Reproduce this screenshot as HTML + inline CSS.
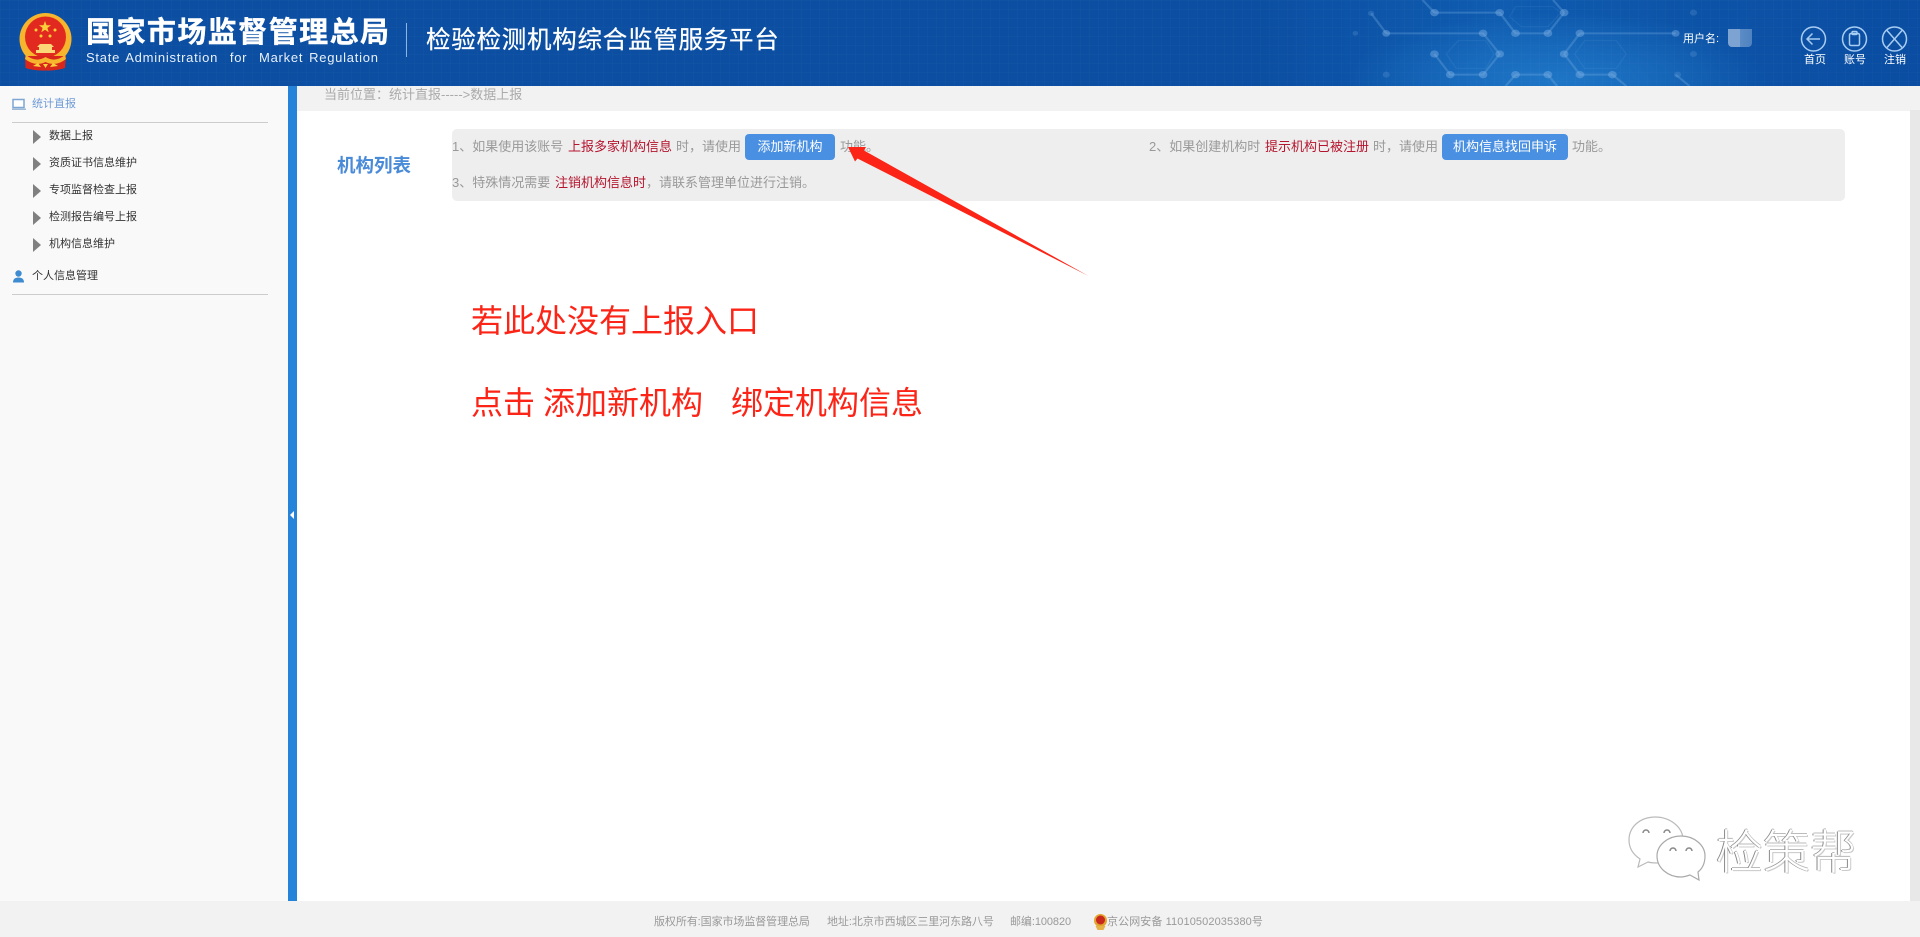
<!DOCTYPE html>
<html lang="zh-CN">
<head>
<meta charset="utf-8">
<title>检验检测机构综合监管服务平台</title>
<style>
html,body{margin:0;padding:0;width:1920px;height:937px;overflow:hidden;background:#fff}
body{position:relative;font-family:"Liberation Sans","Noto Sans CJK SC",sans-serif}
.a{position:absolute}
.t{position:absolute;white-space:nowrap;line-height:20px;height:20px}
.hdr{left:0;top:0;width:1920px;height:86px;overflow:hidden;background:
 radial-gradient(ellipse 210px 70px at 1557px 82px,#1f76c6 0%,rgba(31,118,198,.55) 50%,rgba(31,118,198,0) 100%),
 linear-gradient(90deg,#0b4ea2 0%,#0b4ea2 65%,#0f5cb0 78%,#0c52a6 90%,#0a4da2 100%)}
.grid{left:0;top:0;width:1920px;height:86px;background-image:linear-gradient(rgba(255,255,255,.015) 1px,transparent 1px),linear-gradient(90deg,rgba(255,255,255,.015) 1px,transparent 1px);background-size:9px 9px}
.w{color:#fff}
.side{font-size:11px;color:#333}
.tri{position:absolute;left:33px;width:0;height:0;border-left:8px solid #808080;border-top:7px solid transparent;border-bottom:7px solid transparent}
.g{color:#999;font-size:13px}
.r{color:#b5152e;font-size:13px}
.btn{position:absolute;top:134px;height:26px;line-height:25px;background:#4a90e2;border-radius:4px;color:#fff;font-size:13px;text-align:center}
.note{color:#fb2416;font-size:32px;line-height:40px;height:40px}
.f{color:#999;font-size:11px;letter-spacing:-.08px}
</style>
</head>
<body>
<div class="a hdr"></div>
<div class="a grid"></div>

<svg class="a" style="left:1300px;top:0" width="620" height="86" viewBox="0 0 1568 258" preserveAspectRatio="none">
 <g fill="none" stroke="#7fb2e6" stroke-opacity=".3" stroke-width="6">
  <path d="M340 38H505L545 100H627L668 38"/>
  <path d="M218 100H463L505 162L463 224H380L340 162"/>
  <path d="M708 100H950M708 100L668 162L708 224H790L825 258"/>
  <path d="M545 224H627L650 258M545 224L520 258"/>
  <path d="M310 0L340 38M640 0L668 38M950 224L985 258M180 40L218 100"/>
 </g>
 <g fill="none" stroke="#7fb2e6" stroke-opacity=".12" stroke-width="3">
  <path d="M400 122H470L490 162L470 205H395L370 162Z"/>
  <path d="M720 122H800L825 162L800 205H720L695 162Z"/>
  <path d="M545 20H640L660 38L627 80H560L530 50Z"/>
 </g>
 <g fill="#85b6e8" fill-opacity=".42">
  <circle cx="340" cy="38" r="11"/><circle cx="505" cy="38" r="11"/><circle cx="668" cy="38" r="11"/>
  <circle cx="545" cy="100" r="11"/><circle cx="627" cy="100" r="11"/><circle cx="708" cy="100" r="11"/>
  <circle cx="218" cy="100" r="10"/><circle cx="463" cy="100" r="11"/><circle cx="950" cy="100" r="10"/>
  <circle cx="340" cy="162" r="11"/><circle cx="505" cy="162" r="11"/><circle cx="668" cy="162" r="11"/>
  <circle cx="380" cy="224" r="11"/><circle cx="463" cy="224" r="11"/><circle cx="545" cy="224" r="11"/>
  <circle cx="627" cy="224" r="11"/><circle cx="708" cy="224" r="11"/><circle cx="790" cy="224" r="11"/>
 </g>
 <g fill="#85b6e8" fill-opacity=".2">
  <circle cx="180" cy="40" r="8"/><circle cx="140" cy="100" r="7"/><circle cx="218" cy="224" r="9"/>
  <circle cx="995" cy="38" r="9"/><circle cx="995" cy="162" r="9"/><circle cx="955" cy="224" r="9"/>
 </g>
</svg>

<!-- emblem -->
<svg class="a" style="left:0;top:0" width="100" height="80" viewBox="0 0 100 80">
 <circle cx="45.500" cy="39" r="26" fill="#f7b52d"/>
 <circle cx="45.500" cy="37" r="20.500" fill="#e2291f"/>
 <path d="M45 21l1.500 4.300h4.500l-3.600 2.700 1.300 4.300-3.700-2.600-3.700 2.600 1.300-4.300-3.600-2.700h4.500z" fill="#fbcf3a"/>
 <circle cx="36" cy="30" r="1.500" fill="#fbcf3a"/><circle cx="41" cy="36" r="1.500" fill="#fbcf3a"/>
 <circle cx="50" cy="36" r="1.500" fill="#fbcf3a"/><circle cx="55" cy="30" r="1.500" fill="#fbcf3a"/>
 <path d="M40 44h11l3 3h-2v3h3v3H36v-3h3v-3h-2z" fill="#fcd778"/>
 <path d="M25 56h41l-1 12q-9 3-19.500 2.500q-11 .5-20-2.500z" fill="#d8261c"/>
 <path d="M26 55q10 8 19.500 2q9.500 6 19.500-2l1 4q-10 8-20.500 3q-10.500 5-20.500-3z" fill="#f7b52d"/>
 <path d="M33 66l5-3 3 4zM58 66l-5-3-3 4zM43 64h5l-2.500 4z" fill="#fbcf3a"/>
</svg>

<div class="t w" style="left:86px;top:18px;height:30px;line-height:30px;font-size:29px;font-weight:700;letter-spacing:1.450px;-webkit-text-stroke:.4px #fff">国家市场监督管理总局</div>
<div class="t w" style="left:86px;top:48px;font-size:13px;letter-spacing:.75px;word-spacing:1.500px;color:#e8f0fa">State Administration&nbsp; for&nbsp; Market Regulation</div>
<div class="a" style="left:405.500px;top:23px;width:1.500px;height:34px;background:#8fb4dd"></div>
<div class="t w" style="left:426px;top:26px;height:30px;line-height:30px;font-size:24.500px;letter-spacing:.75px;-webkit-text-stroke:.25px #fff">检验检测机构综合监管服务平台</div>

<div class="t w" style="left:1683px;top:29px;font-size:11px">用户名:</div>
<div class="a" style="left:1728px;top:29px;width:24px;height:18px;background:linear-gradient(90deg,#7da3d2 0,#7da3d2 50%,#5c8cc6 50%,#4f82c0 100%);border-radius:0 0 4px 4px"></div>

<svg class="a" style="left:1790px;top:20px" width="130" height="40" viewBox="1790 20 130 40" fill="none" stroke="#a8cdf2" stroke-width="1.500">
 <circle cx="1813.500" cy="39" r="12"/>
 <path d="M1807 39H1820M1812.500 33.500L1807 39L1812.500 44.500"/>
 <circle cx="1854.500" cy="39" r="12"/>
 <rect x="1849.500" y="33.500" width="10" height="12" rx="1.500"/>
 <rect x="1852" y="31.500" width="5" height="3" rx="1"/>
 <circle cx="1894.500" cy="39" r="12"/>
 <path d="M1887 30.500L1902 47.500M1902 30.500L1887 47.500"/>
</svg>
<div class="t w" style="left:1804px;top:50px;font-size:11px">首页</div>
<div class="t w" style="left:1844px;top:50px;font-size:11px">账号</div>
<div class="t w" style="left:1884px;top:50px;font-size:11px">注销</div>

<!-- sidebar -->
<div class="a" style="left:0;top:86px;width:288px;height:815px;background:#f9f9f9"></div>
<div class="a" style="left:288px;top:86px;width:9px;height:815px;background:#2583d9"></div>
<div class="a" style="left:290px;top:511px;width:0;height:0;border-right:4px solid #fff;border-top:4px solid transparent;border-bottom:4px solid transparent"></div>

<svg class="a" style="left:11px;top:98px" width="16" height="13" viewBox="0 0 16 13">
 <rect x="2" y="1.500" width="11" height="8" fill="#fff" stroke="#7ea6d3" stroke-width="1.500"/>
 <path d="M1 10.500H15V12H1z" fill="#9db9d8"/>
</svg>
<div class="t" style="left:32px;top:94px;font-size:11px;color:#6f9bd6">统计直报</div>
<div class="a" style="left:12px;top:122px;width:256px;height:1px;background:#ccc"></div>

<div class="tri" style="top:130px"></div><div class="t side" style="left:49px;top:126px">数据上报</div>
<div class="tri" style="top:157px"></div><div class="t side" style="left:49px;top:153px">资质证书信息维护</div>
<div class="tri" style="top:184px"></div><div class="t side" style="left:49px;top:180px">专项监督检查上报</div>
<div class="tri" style="top:211px"></div><div class="t side" style="left:49px;top:207px">检测报告编号上报</div>
<div class="tri" style="top:238px"></div><div class="t side" style="left:49px;top:234px">机构信息维护</div>

<svg class="a" style="left:12px;top:270px" width="13" height="13" viewBox="0 0 13 13">
 <circle cx="6.500" cy="3.500" r="3.200" fill="#3d8bd0"/>
 <path d="M1 12.500Q1 7.500 6.500 7.500T12 12.500z" fill="#3d8bd0"/>
</svg>
<div class="t side" style="left:32px;top:266px">个人信息管理</div>
<div class="a" style="left:12px;top:294px;width:256px;height:1px;background:#ccc"></div>

<!-- content -->
<div class="a" style="left:297px;top:86px;width:1623px;height:25px;background:#f2f2f2"></div>
<div class="a" style="left:1910px;top:110px;width:10px;height:791px;background:#e8e8e8"></div>
<div class="t" style="left:324px;top:85px;font-size:13px;color:#aaa">当前位置：统计直报-----&gt;数据上报</div>

<div class="t" style="left:337px;top:156px;font-size:18.500px;font-weight:700;color:#4a8bd8">机构列表</div>

<div class="a" style="left:452px;top:129px;width:1393px;height:72px;background:#eee;border-radius:5px"></div>
<div class="t g" style="left:452px;top:137px">1、如果使用该账号</div>
<div class="t r" style="left:568px;top:137px">上报多家机构信息</div>
<div class="t g" style="left:676px;top:137px">时，请使用</div>
<div class="btn" style="left:745px;width:90px">添加新机构</div>
<div class="t g" style="left:840px;top:137px">功能。</div>

<div class="t g" style="left:1149px;top:137px">2、如果创建机构时</div>
<div class="t r" style="left:1265px;top:137px">提示机构已被注册</div>
<div class="t g" style="left:1373px;top:137px">时，请使用</div>
<div class="btn" style="left:1442px;width:126px">机构信息找回申诉</div>
<div class="t g" style="left:1572px;top:137px">功能。</div>

<div class="t g" style="left:452px;top:173px">3、特殊情况需要</div>
<div class="t r" style="left:555px;top:173px">注销机构信息时</div>
<div class="t g" style="left:646px;top:173px">，请联系管理单位进行注销。</div>

<!-- annotation -->
<svg class="a" style="left:840px;top:140px" width="260" height="145" viewBox="840 140 260 145">
 <path d="M848 147L866 147L864 150.500L1088.500 276L857.500 158.500L855 161.500Z" fill="#fb2416"/>
</svg>
<div class="t note" style="left:471px;top:301px">若此处没有上报入口</div>
<div class="t note" style="left:471px;top:383px">点击</div>
<div class="t note" style="left:543px;top:383px">添加新机构</div>
<div class="t note" style="left:731px;top:383px">绑定机构信息</div>

<!-- watermark -->
<svg class="a" style="left:1620px;top:810px" width="90" height="75" viewBox="1620 810 90 75">
 <path d="M1655 817C1640 817 1629 827 1629 840C1629 849 1634 855 1640 859L1638 867L1648 862C1651 863 1654 863 1657 863C1672 863 1683 853 1683 840C1683 827 1670 817 1655 817Z" fill="#fff" stroke="#bbb" stroke-width="1.200"/>
 <path d="M1681 836C1668 836 1657 845 1657 856C1657 868 1668 877 1681 877C1684 877 1687 876 1690 875L1699 880L1698 872C1703 868 1705 862 1705 856C1705 845 1694 836 1681 836Z" fill="#fff" stroke="#aaa" stroke-width="1.200"/>
 <path d="M1643 833a3 3 0 0 1 6 0M1664 833a3 3 0 0 1 6 0M1670 851a3 3 0 0 1 6 0M1686 851a3 3 0 0 1 6 0" fill="none" stroke="#888" stroke-width="1.500"/>
</svg>
<div class="t" style="left:1716px;top:827px;height:52px;line-height:52px;font-size:47px;font-weight:300;color:#fff;text-shadow:-1px 0 0 #888,0 -1px 0 #bbb,1px 1px 0 #ccc">检策帮</div>

<!-- footer -->
<div class="a" style="left:0;top:901px;width:1920px;height:36px;background:#f2f2f2"></div>
<div class="t f" style="left:654px;top:912px">版权所有:国家市场监督管理总局</div>
<div class="t f" style="left:827px;top:912px">地址:北京市西城区三里河东路八号</div>
<div class="t f" style="left:1010px;top:912px">邮编:100820</div>
<svg class="a" style="left:1093px;top:913px" width="15" height="18" viewBox="0 0 15 18">
 <circle cx="7.500" cy="7.500" r="6.500" fill="#e2a52d"/>
 <circle cx="7.500" cy="7" r="4.500" fill="#c9281e"/>
 <path d="M2.500 13h10l-2 4h-6z" fill="#e6b34a"/>
</svg>
<div class="t f" style="left:1107px;top:912px;letter-spacing:.1px">京公网安备 11010502035380号</div>
</body>
</html>
